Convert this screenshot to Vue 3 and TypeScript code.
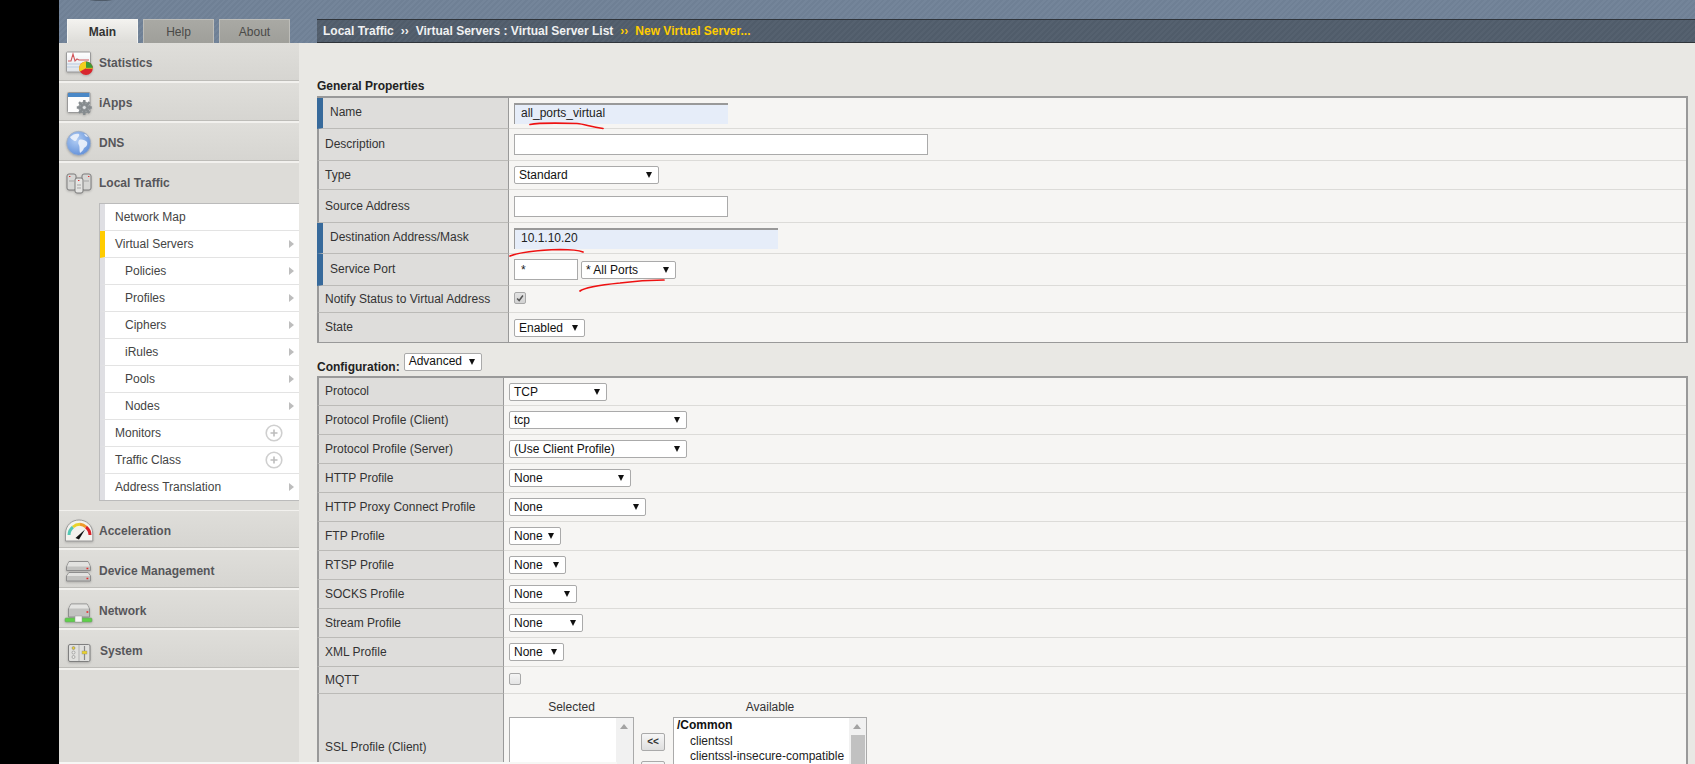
<script setup lang="ts">
interface SubItem { label: string; indent?: boolean; active?: boolean; trail: 'arrow' | 'plus' | 'none' }
interface Control { kind: 'input' | 'select' | 'check'; value?: string; width: number; req?: boolean; checked?: boolean }
interface Row { label: string; h: number; req?: boolean; controls: Control[] }

const subItems: SubItem[] = [
  { label: 'Network Map', trail: 'none' },
  { label: 'Virtual Servers', active: true, trail: 'arrow' },
  { label: 'Policies', indent: true, trail: 'arrow' },
  { label: 'Profiles', indent: true, trail: 'arrow' },
  { label: 'Ciphers', indent: true, trail: 'arrow' },
  { label: 'iRules', indent: true, trail: 'arrow' },
  { label: 'Pools', indent: true, trail: 'arrow' },
  { label: 'Nodes', indent: true, trail: 'arrow' },
  { label: 'Monitors', trail: 'plus' },
  { label: 'Traffic Class', trail: 'plus' },
  { label: 'Address Translation', trail: 'arrow' },
]

const general: Row[] = [
  { label: 'Name', h: 31, req: true, controls: [{ kind: 'input', value: 'all_ports_virtual', width: 214, req: true }] },
  { label: 'Description', h: 32, controls: [{ kind: 'input', value: '', width: 414 }] },
  { label: 'Type', h: 29, controls: [{ kind: 'select', value: 'Standard', width: 145 }] },
  { label: 'Source Address', h: 33, controls: [{ kind: 'input', value: '', width: 214 }] },
  { label: 'Destination Address/Mask', h: 31, req: true, controls: [{ kind: 'input', value: '10.1.10.20', width: 264, req: true }] },
  { label: 'Service Port', h: 32, req: true, controls: [{ kind: 'input', value: '*', width: 64 }, { kind: 'select', value: '* All Ports', width: 95 }] },
  { label: 'Notify Status to Virtual Address', h: 27, controls: [{ kind: 'check', width: 12, checked: true }] },
  { label: 'State', h: 30, controls: [{ kind: 'select', value: 'Enabled', width: 71 }] },
]

const sel = (label: string, value: string, width: number, h = 29): Row => ({ label, h, controls: [{ kind: 'select', value, width }] })

const config: Row[] = [
  sel('Protocol', 'TCP', 98, 28),
  sel('Protocol Profile (Client)', 'tcp', 178),
  sel('Protocol Profile (Server)', '(Use Client Profile)', 178),
  sel('HTTP Profile', 'None', 122),
  sel('HTTP Proxy Connect Profile', 'None', 137),
  sel('FTP Profile', 'None', 52),
  sel('RTSP Profile', 'None', 57),
  sel('SOCKS Profile', 'None', 68),
  sel('Stream Profile', 'None', 74),
  sel('XML Profile', 'None', 55),
  { label: 'MQTT', h: 27, controls: [{ kind: 'check', width: 12 }] },
]

const widthOf = (c: Control) => ({ width: `${c.width}px` })
const heightOf = (r: Row) => ({ height: `${r.h}px` })
</script>

<template>
  <div class="page">
    <div class="gutter"></div>
    <div class="app">
      <header class="masthead">
        <span class="logo-edge"></span>
        <nav class="tabs">
          <a class="tab on">Main</a>
          <a class="tab">Help</a>
          <a class="tab">About</a>
        </nav>
        <div class="crumbs">
          <span>Local Traffic</span><i>››</i><span>Virtual Servers : Virtual Server List</span><i class="gold">››</i><span class="gold">New Virtual Server...</span>
        </div>
      </header>

      <div class="body">
        <aside class="side">
          <div class="nav">
            <svg class="ico" viewBox="0 0 32 32">
              <defs><linearGradient id="w1" x1="0" y1="0" x2="0" y2="1"><stop offset="0" stop-color="#fff"/><stop offset="1" stop-color="#dfe3e8"/></linearGradient></defs>
              <rect x="2.500" y="5" width="24" height="20" rx="1" fill="url(#w1)" stroke="#9a9a9a"/>
              <path d="M3 17h23M3 20h23" stroke="#c9d6e6" stroke-width="1.500"/>
              <path d="M4 14 7 14 9 7 11 14 13 12 15 13 25 13" fill="none" stroke="#d0565a" stroke-width="1.100"/>
              <circle cx="22" cy="21.300" r="6.800" fill="#d9262e"/>
              <path d="M22 21.300V14.500A6.800 6.800 0 0 1 28.800 21.300Z" fill="#3d9b35"/>
              <path d="M22 21.300 16 24.600A6.800 6.800 0 0 1 22 14.500Z" fill="#f2cf1d"/>
              <path d="M22 21.300 28.800 21.300" stroke="#f2cf1d" stroke-width=".8"/>
            </svg>
            <span>Statistics</span>
          </div>
          <div class="nav">
            <svg class="ico" viewBox="0 0 32 32">
              <rect x="3.500" y="5.500" width="22.500" height="20" rx="1" fill="#fdfdfd" stroke="#999"/>
              <rect x="4" y="6" width="21.500" height="4" fill="#4a88c7"/>
              <g fill="#a0a6a9" stroke="#858b8e">
                <circle cx="20.300" cy="20.500" r="5.500"/>
                <path d="M20.300 13v15M12.800 20.500h15M15 15.200l10.600 10.600M25.600 15.200 15 25.800" stroke-width="2.400"/>
              </g>
              <circle cx="20.300" cy="20.500" r="2" fill="#dfe2e4" stroke="#858b8e" stroke-width=".7"/>
            </svg>
            <span>iApps</span>
          </div>
          <div class="nav">
            <svg class="ico" viewBox="0 0 32 32">
              <defs><radialGradient id="g1" cx=".4" cy=".35" r=".75"><stop offset="0" stop-color="#b4cff5"/><stop offset="1" stop-color="#5a8ad6"/></radialGradient></defs>
              <circle cx="14.700" cy="16.300" r="12" fill="url(#g1)" stroke="#a5b0c0" stroke-width=".8"/>
              <path d="M6 10c3-3 7-4 9-3 1 2-1 3-2 5-1 3-3 2-4 1s-2-1-3-3ZM15 13c3-1 6 0 8 2 1 3-1 5-3 6-1 3-3 4-4 5-1-3 0-6-1-8-1-1-1-3 0-5ZM20 7c2 0 3 1 4 3-2 0-3-1-4-3Z" fill="#eef3fb" fill-opacity=".9"/>
            </svg>
            <span>DNS</span>
          </div>
          <div class="nav plain">
            <svg class="ico" viewBox="0 0 32 32">
              <g fill="#d6d6d4" stroke="#7c7c7c">
                <rect x="3" y="7" width="9" height="16" rx="2"/>
                <rect x="18" y="7" width="9" height="16" rx="2"/>
                <rect x="11" y="11" width="8" height="15" rx="2" fill="#e4e4e2"/>
              </g>
              <path d="M5 9.500h1.400M24 9.500h1.400M14 13.500h1.400" stroke="#e23030" stroke-width="1.200"/>
              <path d="M13 18h4M13 21h4M5 14h5M20 14h5" stroke="#a5a5a5"/>
            </svg>
            <span>Local Traffic</span>
          </div>

          <ul class="sub">
            <li v-for="it in subItems" :key="it.label" :class="{ active: it.active }">
              <span :class="{ indent: it.indent }">{{ it.label }}</span>
              <svg v-if="it.trail === 'arrow'" class="chev" viewBox="0 0 5 8"><path d="M0 0 5 4 0 8Z" fill="#bdbdbd"/></svg>
              <svg v-else-if="it.trail === 'plus'" class="plus" viewBox="0 0 18 18">
                <circle cx="9" cy="9" r="7.800" fill="#fff" stroke="#cfcfcf" stroke-width="1.600"/>
                <path d="M9 5.500v7M5.500 9h7" stroke="#bdbdbd" stroke-width="1.600"/>
              </svg>
            </li>
          </ul>

          <div class="nav low first">
            <svg class="ico" viewBox="0 0 32 32">
              <path d="M1.500 26V19C1.500 10 8 5 15 5S28.800 10 28.800 19V26Z" fill="#f3f2ee" stroke="#999"/>
              <path d="M5 20A10.500 10.500 0 0 1 9 12" fill="none" stroke="#53c7b4" stroke-width="3"/>
              <path d="M9 12A10.500 10.500 0 0 1 16 9.200" fill="none" stroke="#e9d22c" stroke-width="3"/>
              <path d="M16 9.200A10.500 10.500 0 0 1 22 12" fill="none" stroke="#ef9a2a" stroke-width="3"/>
              <path d="M22 12A10.500 10.500 0 0 1 26 20" fill="none" stroke="#d81f26" stroke-width="3"/>
              <path d="M11.500 23 21 14.500 15 24.500Z" fill="#111"/>
            </svg>
            <span>Acceleration</span>
          </div>
          <div class="nav low">
            <svg class="ico" viewBox="0 0 32 32">
              <g fill="#c2c2c0" stroke="#8e8e8e">
                <path d="M2.500 12 5 6.500h19l2.500 5.500v3.500h-24Z"/>
                <path d="M2.500 21 5 17.500h19l2.500 3.500v5h-24Z"/>
              </g>
              <path d="M5 7h19l2 4.500H3Z" fill="#e2e2e0"/>
              <path d="M5 18h19l2 3H3Z" fill="#e2e2e0"/>
              <path d="M22.500 13.500h1.800M22.500 23.500h1.800" stroke="#e52a2a" stroke-width="1.600"/>
            </svg>
            <span>Device Management</span>
          </div>
          <div class="nav low">
            <svg class="ico" viewBox="0 0 32 32">
              <path d="M4.500 14 7 9h16l2.500 5v8h-21Z" fill="#c2c2c0" stroke="#8e8e8e"/>
              <path d="M7 9.500h16l2 4H5Z" fill="#e4e4e2"/>
              <path d="M22.500 17h1.800" stroke="#e52a2a" stroke-width="1.600"/>
              <rect x="1" y="23" width="27" height="4" rx="1" fill="#5fd04a" stroke="#6f9f68" stroke-width=".6"/>
              <rect x="11" y="21" width="7" height="6" fill="#f5f5f3" stroke="#999" stroke-width=".5"/>
            </svg>
            <span>Network</span>
          </div>
          <div class="nav low">
            <svg class="ico" viewBox="0 0 32 32">
              <rect x="4.500" y="9.500" width="21.500" height="17" rx="1.500" fill="#e0e0de" stroke="#7f7f7f"/>
              <path d="M15 10v16" stroke="#b0b0b0"/>
              <circle cx="9.500" cy="13" r="1.500" fill="#e9cf33" stroke="#777" stroke-width=".5"/>
              <circle cx="9.500" cy="17.500" r="1.500" fill="#e8e8e6" stroke="#777" stroke-width=".5"/>
              <circle cx="9.500" cy="22" r="1.500" fill="#e8e8e6" stroke="#777" stroke-width=".5"/>
              <path d="M20.500 11v14" stroke="#888" stroke-width="1.200"/>
              <rect x="18" y="16" width="5" height="3" fill="#ead22e" stroke="#888" stroke-width=".4"/>
            </svg>
            <span class="sys">System</span>
          </div>
        </aside>

        <main class="content">
          <h2 class="sect">General Properties</h2>
          <div class="props general">
            <div v-for="r in general" :key="r.label" class="row" :style="heightOf(r)">
              <div class="lab" :class="{ req: r.req }">{{ r.label }}</div>
              <div class="val">
                <template v-for="(c, i) in r.controls" :key="i">
                  <input v-if="c.kind === 'input'" class="txt" :class="{ reqin: c.req }" :style="widthOf(c)" :value="c.value" />
                  <span v-else-if="c.kind === 'select'" class="pick" :style="widthOf(c)">{{ c.value }}</span>
                  <span v-else class="box" :class="{ ticked: c.checked }">
                    <svg v-if="c.checked" viewBox="0 0 12 12"><path d="M2.500 6.500 5 9 9.500 3" fill="none" stroke="#555" stroke-width="1.800"/></svg>
                  </span>
                </template>
              </div>
            </div>
          </div>

          <div class="confhead">
            <h2 class="sect conf">Configuration:</h2>
            <span class="pick adv">Advanced</span>
          </div>
          <div class="props config">
            <div v-for="r in config" :key="r.label" class="row" :style="heightOf(r)">
              <div class="lab">{{ r.label }}</div>
              <div class="val">
                <template v-for="(c, i) in r.controls" :key="i">
                  <span v-if="c.kind === 'select'" class="pick" :style="widthOf(c)">{{ c.value }}</span>
                  <span v-else class="box"></span>
                </template>
              </div>
            </div>
            <div class="row ssl">
              <div class="lab">SSL Profile (Client)</div>
              <div class="val stack">
                <div class="lister">
                  <div class="cap">Selected</div>
                  <div class="list small">
                    <div class="items"></div>
                    <div class="bar"><b class="up"></b></div>
                  </div>
                </div>
                <div class="moves">
                  <button class="mv">&lt;&lt;</button>
                  <button class="mv" aria-label="Remove"></button>
                </div>
                <div class="lister">
                  <div class="cap">Available</div>
                  <div class="list wide">
                    <div class="items">
                      <div class="grp">/Common</div>
                      <div class="opt">clientssl</div>
                      <div class="opt">clientssl-insecure-compatible</div>
                    </div>
                    <div class="bar"><b class="up"></b><b class="thumb"></b></div>
                  </div>
                </div>
              </div>
            </div>
          </div>
        </main>
      </div>
    </div>

    <svg class="ink" viewBox="0 0 1695 764">
      <g fill="none" stroke="#ee1111" stroke-width="1.700" stroke-linecap="round">
        <path d="M530 124.500C540 122.500 560 123 577 123.500C585 124 590 127 603 128.500"/>
        <path d="M510 256C520 252 545 250 560 249.500C570 249.500 578 250 583 252"/>
        <path d="M580 291C585 287 600 285 620 283C635 281 650 280 664 280"/>
      </g>
    </svg>
    <div class="edge"></div>
  </div>
</template>

<style>
html, body { margin: 0; background: #000; }
</style>

<style scoped>
* { box-sizing: border-box; }
.page {
  position: relative;
  display: flex;
  width: 1695px;
  height: 764px;
  overflow: hidden;
  background: #000;
  font: 12px/14px "Liberation Sans", Arial, sans-serif;
  color: #333;
}
.gutter { width: 59px; flex: none; }
.app { flex: 1; display: flex; flex-direction: column; min-width: 0; }

.masthead {
  position: relative;
  height: 43px;
  flex: none;
  display: flex;
  padding: 19px 0 0 8px;
  background: repeating-linear-gradient(135deg, #74859a 0 2px, #6f8095 2px 4px);
}
.logo-edge {
  position: absolute;
  left: 29px;
  top: -3px;
  width: 26px;
  height: 4px;
  border-radius: 50%;
  background: #4f5b69;
}
.tabs { display: flex; gap: 5px; width: 250px; flex: none; }
.tab {
  width: 71px;
  height: 24px;
  display: flex;
  align-items: center;
  justify-content: center;
  color: #4a4a48;
  background: linear-gradient(#a9a9a4, #9f9f9a);
  border: 1px solid #bdbdb9;
  border-bottom: 0;
}
.tab.on {
  color: #333;
  font-weight: 700;
  background: linear-gradient(#f3f2ef, #dddcd8);
  border-color: #f5f5f2;
}
.crumbs {
  flex: 1;
  height: 24px;
  display: flex;
  align-items: center;
  padding-left: 6px;
  font-weight: 700;
  color: #f0f1f2;
  border-top: 1px solid #2f343a;
  border-bottom: 1px solid #2f343a;
  background: repeating-linear-gradient(135deg, #55616f 0 2px, #505c6a 2px 4px);
}
.crumbs i { font-style: normal; margin: 0 7px; font-weight: 700; }
.crumbs .gold { color: #ffcc00; }

.body { flex: 1; display: flex; min-height: 0; }
.side { width: 240px; flex: none; background: #dddcd8; }
.nav {
  height: 40px;
  display: flex;
  align-items: center;
  gap: 3px;
  padding: 1px 0 0 5px;
  font-weight: 700;
  color: #56565a;
  background: linear-gradient(#dfdeda, #d6d5d1);
  border-bottom: 2px solid #f2f1ee;
  box-shadow: inset 0 -1px 0 #bdbcb8;
}
.nav.plain { background: none; border-bottom: 0; box-shadow: none; padding-top: 0; }
.nav.low { padding-top: 3px; }
.nav.first { margin-top: 9px; box-shadow: inset 0 1px 0 #f2f1ee, inset 0 -1px 0 #bdbcb8; }
.sys { margin-left: 1px; }
.ico { width: 32px; height: 32px; flex: none; filter: drop-shadow(0 1px 1px rgba(0, 0, 0, .2)); }

.sub {
  list-style: none;
  margin: 0 0 0 40px;
  padding: 0;
  border: 1px solid #bbb;
  border-right: 0;
  background: #fff;
}
.sub li {
  position: relative;
  height: 27px;
  display: flex;
  align-items: center;
  justify-content: space-between;
  padding: 0 5px 0 10px;
  color: #444;
  border-left: 5px solid #dfdfe3;
  border-bottom: 1px solid #e3e3e3;
}
.sub li:last-child { height: 26px; border-bottom: 0; }
.sub li.active { border-left-color: #ffcc00; }
.indent { margin-left: 10px; }
.chev { width: 5px; height: 8px; }
.plus { width: 18px; height: 18px; margin-right: 11px; }

.content { flex: 1; min-width: 0; padding: 36px 7px 0 18px; background: #e9e8e4; }
.sect { margin: 0 0 3px; font-size: 12px; line-height: 14px; font-weight: 700; color: #222; }
.props { background: #f6f5f3; border-top: 2px solid #999; border-right: 2px solid #999; }
.general .lab { width: 192px; }
.config .lab { width: 187px; }
.row { display: flex; }
.lab {
  flex: none;
  display: flex;
  align-items: center;
  padding: 0 0 1px 6px;
  color: #333;
  background: #dedddb;
  border-left: 2px solid #999;
  border-right: 1px solid #999;
  border-bottom: 1px solid #bbbab7;
}
.lab.req { border-left: 6px solid #376a9b; padding: 0 0 2px 7px; }
.val {
  flex: 1;
  display: flex;
  align-items: center;
  gap: 3px;
  padding-left: 5px;
  border-bottom: 1px solid #dcdbd8;
}
.general .row:last-child .lab,
.general .row:last-child .val { border-bottom-color: #999; }
.txt {
  height: 21px;
  padding: 0 6px;
  font: inherit;
  color: #222;
  background: #fff;
  border: 1px solid #aaa;
  border-radius: 0;
  outline: 0;
}
.txt.reqin {
  padding-bottom: 2px;
  background: #e6edf9;
  border: 0;
  border-top: 2px solid #999;
  border-left: 1px solid #999;
}
.pick {
  position: relative;
  display: block;
  height: 18px;
  padding: 1px 0 0 4px;
  color: #111;
  background: #fff;
  border: 1px solid #aaa;
  border-radius: 2px;
}
.pick::after {
  content: "";
  position: absolute;
  right: 6px;
  top: 5px;
  border-left: 3px solid transparent;
  border-right: 3px solid transparent;
  border-top: 6px solid #111;
}
.box {
  width: 12px;
  height: 12px;
  display: block;
  margin-bottom: 3px;
  background: linear-gradient(#f4f4f4, #e4e4e4);
  border: 1px solid #a8a8a8;
  border-radius: 2px;
}
.box.ticked { background: linear-gradient(#e2e2e2, #d2d2d2); }
.box svg { display: block; width: 10px; height: 10px; }

.confhead { display: flex; gap: 4px; margin-top: 10px; height: 23px; }
.conf { padding-top: 7px; margin: 0; }
.adv { width: 78px; padding-top: 0; }

.ssl { height: 107px; }
.val.stack { align-items: flex-start; padding-top: 6px; gap: 0; }
.cap { height: 17px; line-height: 15px; text-align: center; color: #333; }
.list { display: flex; height: 84px; background: #fff; border: 1px solid #aaa; }
.list.small { width: 125px; }
.list.wide { width: 194px; }
.items { flex: 1; min-width: 0; padding: 0 0 0 3px; color: #222; line-height: 15.5px; }
.grp { font-weight: 700; color: #111; }
.opt { padding-left: 13px; }
.bar { position: relative; width: 17px; flex: none; background: #f1f1f1; }
.up {
  position: absolute;
  left: 4px;
  top: 6px;
  border-left: 4px solid transparent;
  border-right: 4px solid transparent;
  border-bottom: 5px solid #a3a3a3;
}
.thumb { position: absolute; left: 2px; right: 1px; top: 17px; height: 60px; background: #c1c1c1; }
.moves { width: 39px; padding: 33px 0 0 7px; display: flex; flex-direction: column; gap: 10px; }
.mv {
  width: 24px;
  height: 18px;
  padding: 0;
  font: 700 10px/14px "Liberation Sans", Arial, sans-serif;
  color: #333;
  background: linear-gradient(#f6f6f6, #dedede);
  border: 1px solid #aaa;
  border-radius: 2px;
}

.ink { position: absolute; left: 0; top: 0; width: 1695px; height: 764px; pointer-events: none; }
.edge { position: absolute; left: 59px; bottom: 0; width: 558px; height: 2px; background: #f7f7f5; }
</style>
